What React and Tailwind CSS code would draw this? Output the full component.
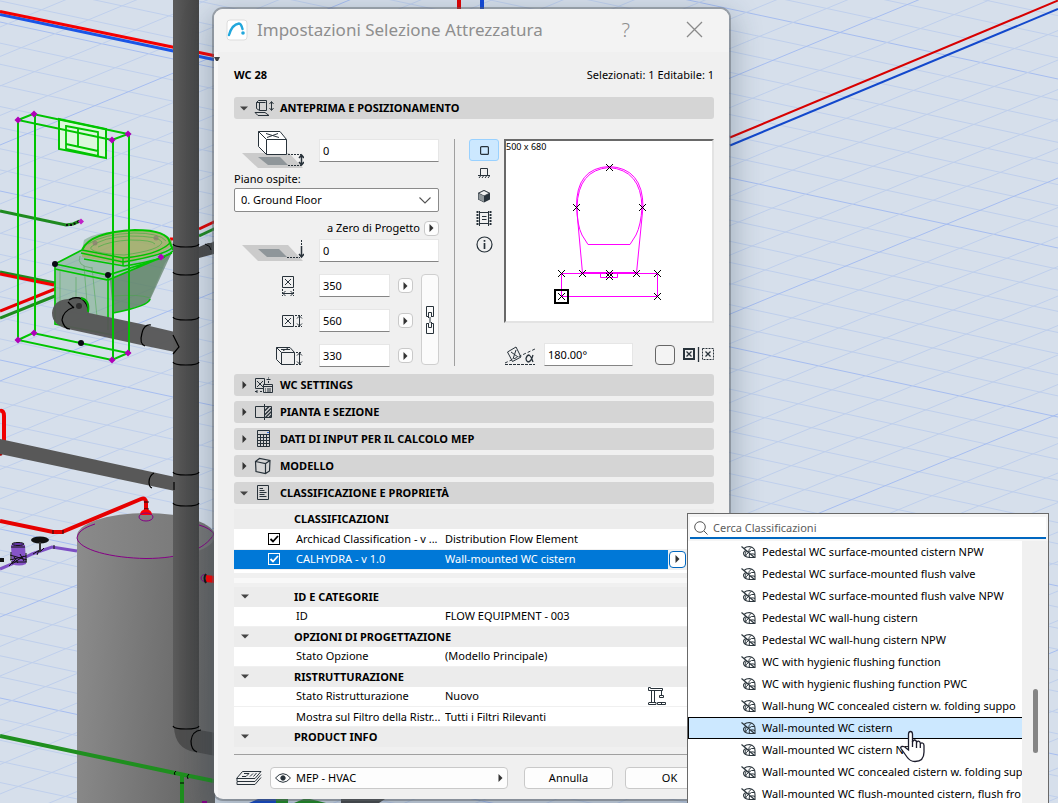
import React from "react";

const INK = "#28323a";

/* ---------- 3D viewport ---------- */

const range = (n) => Array.from({ length: n }, (_, i) => i);

function Viewport() {
  const rings = [247, 275, 320, 365, 475, 506, 729];
  return (
    <svg
      className="absolute inset-0 h-full w-full"
      viewBox="0 0 1058 803"
      preserveAspectRatio="xMinYMin slice"
      fill="none"
      aria-hidden="true"
    >
      <defs>
        <linearGradient id="riser" x1="0" x2="1" y1="0" y2="0">
          <stop offset="0" stopColor="#5b5b5b" />
          <stop offset="0.5" stopColor="#4f4f4f" />
          <stop offset="1" stopColor="#454545" />
        </linearGradient>
        <linearGradient id="tank" x1="0" x2="1" y1="0" y2="0.1">
          <stop offset="0" stopColor="#8c8c8c" />
          <stop offset="1" stopColor="#646464" />
        </linearGradient>
        <linearGradient id="lid" x1="0" x2="1" y1="0" y2="0">
          <stop offset="0" stopColor="#8a8a8a" />
          <stop offset="1" stopColor="#757575" />
        </linearGradient>
      </defs>

      <g strokeWidth="1">
        {range(50).map((i) => {
          const y = 22 + (i - 12) * 21.125;
          return <path key={i} d={`M0 ${y}L1058 ${y + 226}`} stroke={(i - 12) % 8 === 0 ? "#a6bdf0" : "#bfcfec"} />;
        })}
        {range(46).map((i) => {
          const y = 145 + (i - 4) * 29.5;
          return <path key={i} d={`M0 ${y}L1058 ${y - 439}`} stroke={(i - 4) % 8 === 0 ? "#a6bdf0" : "#bfcfec"} />;
        })}
      </g>

      {/* supply lines */}
      <g strokeWidth="3">
        <path d="M0 14.5L216 60" stroke="#1a55e6" />
        <path d="M0 11.5L216 56" stroke="#f50000" />
        <path d="M730 145.500L1058 9" stroke="#1248cc" strokeWidth="2" />
        <path d="M730 137.500L1058 0.500" stroke="#d80000" strokeWidth="2" />
        <path d="M459 0V10" stroke="#e00000" strokeWidth="4" />
        <path d="M482 0V10" stroke="#1248d8" strokeWidth="4" />
        <path d="M199 229L216 221" stroke="#e00000" />
        <path d="M199 236L216 228" stroke="#1f8a1f" />
        <path d="M0 272L55 283" stroke="#1f8a1f" />
        <path d="M0 274L54 285" stroke="#f50000" />
        <path d="M0 318L55 296" stroke="#1f8a1f" />
        <path d="M0 311L55 289" stroke="#e80000" />
        <path d="M0 211L66 225L73 224L80 221" stroke="#1f8a1f" />
        <path d="M66 225h6l7-4" stroke="#111" strokeDasharray="2 2" strokeWidth="2" />
        <path d="M170 239h5" stroke="#f50000" />
      </g>
      <path d="M78 221.500l3-3 3 3-3 3z" fill="#c020c8" />

      {/* tank */}
      <path d="M77 538V803H215V540Z" fill="url(#tank)" />
      <ellipse cx="146" cy="536" rx="69" ry="23" fill="url(#lid)" />
      <path d="M77 538C78 532 83 528 95 524M77 538C79 550 112 558 146 558.500C180 558.500 205 550 214 534M199 525Q210 528 214 534" stroke="#850085" />
      <path d="M201 578a3 4 0 0 1 4-3M201 578a3 4 0 0 0 4 3" stroke="#850085" />
      <path d="M206 575L215 576V583L206 582Z" fill="#f00" />
      <path d="M206 574q-3 4 0 9" stroke="#111" strokeWidth="2" />

      {/* hot water line */}
      <path d="M0 521L53 532L62 532L141 499Q146 497 146 503V512" stroke="#e60000" strokeWidth="4" />
      <path d="M53 530v4M63 530v4M144 502h5M144 509h5" stroke="#111" />
      <path d="M140 515q0-5 6-6q6 1 6 6z" fill="#f00" />
      <ellipse cx="146" cy="517" rx="7" ry="4" stroke="#850085" />
      <path d="M0 411Q4 410 4 416V442" stroke="#f00000" strokeWidth="4" />
      <path d="M0 455l2-1" stroke="#a00" strokeWidth="2" />

      {/* valves */}
      <path d="M0 569L12 564L32 554L52 547L77 551" stroke="#7d4fc4" strokeWidth="3" />
      <path d="M11 545q7-3 14 0l1 19q-7 3-14 0z" fill="#8654c8" />
      <path d="M11 547h14M10 555l17 5M10 560l16-4M12 564l12-8M11 562h16M9 566l6-6M11 552v8M26 553v9M14 557l4 6M20 554l4 7M33 554l5-3M37 555l2-5M40 552l4-4M54 545v4" stroke="#111" />
      <ellipse cx="18" cy="544" rx="6" ry="1.500" fill="#6637ac" stroke="#111" />
      <ellipse cx="40" cy="540" rx="9" ry="3.500" fill="#111" />
      <path d="M40 542V552" stroke="#333" strokeWidth="2" />
      <path d="M0 558h4v4h-4z" fill="#111" />

      {/* waste pipes */}
      <path d="M0 439L175 477V491L0 454Z" fill="#585858" />
      <path d="M154 473q-5 3-5 9q0 5 3 6" stroke="#000" strokeWidth="1.200" />
      <path d="M199 247L208 243Q213 243 214 241V254L199 258Z" fill="#4b4b4b" />
      <path d="M205 244q6 2 6 6" stroke="#000" />

      {/* cistern and bowl */}
      <path d="M55 264L82 250L84 240Q96 231 135 230Q172 231 173 244Q174 254 165 263L149 301Q145 306 113 313L112 336L55 324Z" fill="#4c8f58" fillOpacity="0.400" />
      <path d="M110 280L172 252L150 300Q145 307 113 313Z" fill="#5b7c62" fillOpacity="0.700" />
      <path d="M82 250Q85 232 135 230Q170 231 172 243Q173 252 122 264L82 257Z" fill="#a9ad63" fillOpacity="0.750" />
      <path d="M82 250Q90 232 135 230Q168 230 170 243L173 250" stroke="#00c400" strokeWidth="2" />
      <path d="M81 253L123 262Q166 255 173 247M84 259L124 266Q164 260 173 251M82 250L123 258Q158 255 170 243M123 258V266" stroke="#00c400" strokeWidth="1.500" />
      <path d="M91 247Q102 237 130 236Q159 236 162 242Q161 250 124 255Q88 253 91 247ZM88 244Q104 234 134 233Q160 233 166 241M98 247Q110 241 130 240Q152 240 155 244" stroke="#3fae3f" strokeOpacity="0.650" />
      <path d="M55 264L82 250M55 269L108 280L172 253M55 264L108 275L165 257M55 264V324L113 335V280M108 276V330M113 313Q149 306 150 299" stroke="#00c400" strokeWidth="1.700" />
      <path d="M76 277V310M84 266L88 315M92 267L97 317M60 270V320M113 296Q140 294 150 298M80 256Q76 266 92 268" stroke="#43a543" strokeOpacity="0.500" />
      <circle cx="95" cy="243" r="2.500" fill="#8a7a72" fillOpacity="0.700" />
      <circle cx="156" cy="238" r="2.500" fill="#8a7a72" fillOpacity="0.700" />

      <path d="M76 297Q86 296 88 305L89 313L141 324L175 332V352L141 345L68 329Q52 325 52 313Q53 300 68 299Z" fill="#565656" fillOpacity="0.960" />
      <path d="M69 300q6-4 13-1q6 5 6 12M74 308l-6-6M74 307q-11 4-12 13q2 9 8 9" stroke="#000" strokeWidth="1.200" />
      <path d="M81 298Q90 300 88 312" stroke="#00b400" strokeWidth="2" />
      <circle cx="79" cy="306" r="3" fill="#2f2f2f" />
      <path d="M151 325q-7-1-9 8q-3 11 3 13" stroke="#000" strokeWidth="1.200" />
      <path d="M113 276V334" stroke="#00b400" strokeWidth="1.500" />

      {/* bounding frame */}
      <path d="M59 119L106 129V158L59 149Z" fill="#dcf8dc" stroke="#00c400" strokeWidth="2" />
      <path d="M66 126L98 132V156L66 149ZM78 129V147M66 144L98 151" stroke="#00c400" strokeWidth="1.800" />
      <path d="M18 120L33 114L128 134L112 140ZM18 340L33 333L128 353L112 360ZM18 120V340M35 114V333M113 141V360M129 134V353" stroke="#00c400" strokeWidth="2" />
      {[[18, 120], [34, 114], [128, 134], [112, 140], [18, 340], [34, 333], [128, 353], [112, 360], [161, 257]].map(([x, y]) => (
        <path key={`${x}-${y}`} d={`M${x - 3.5} ${y}l3.500-3.500 3.500 3.500-3.500 3.500z`} fill="#b000b8" />
      ))}
      {[[55, 264], [108, 275], [81, 343]].map(([x, y]) => (
        <circle key={x} cx={x} cy={y} r="3" fill="#0a0a14" />
      ))}

      {/* riser */}
      <path d="M174 727Q175 749 195 752L216 756V733L199 730V727Z" fill="#4d4d4d" />
      <path d="M201 730q-9 1-10 11q0 9 6 11" stroke="#000" strokeWidth="1.200" />
      <path d="M173 0H199V728H173Z" fill="url(#riser)" />
      {rings.map((y) => (
        <path key={y} d={`M173 ${y - 3}Q174 ${y} 186 ${y}Q198 ${y} 199 ${y - 3}`} stroke="#000" strokeWidth="1.200" />
      ))}
      <path d="M173 335l6 12-6 7M174 482v8" stroke="#000" strokeWidth="1.200" />

      {/* drain line */}
      <path d="M0 736L175 773L214 781" stroke="#1f8f1f" strokeWidth="4" />
      <path d="M182 776V803" stroke="#1f8f1f" strokeWidth="4" />
      <path d="M176 771q-3 2-1 4M189 774q-3 2-1 5M180 783h4" stroke="#000" />
      <path d="M202 802h5" stroke="#850085" strokeWidth="2" />
      <path d="M249 803l9-4h18v4z" fill="#1248cc" />
      <path d="M276 799h12v4h-12zM294 803l12-5 20 5z" fill="#1f8f1f" />
      <path d="M341 803v-4h44l-6 4z" fill="#4a4a4a" />
    </svg>
  );
}

/* ---------- icons ---------- */

function Icon({ w, h, children, className = "" }) {
  return (
    <svg width={w} height={h} viewBox={`0 0 ${w} ${h}`} fill="none" stroke={INK} className={`shrink-0 ${className}`} aria-hidden="true">
      {children}
    </svg>
  );
}

const TriRight = () => (
  <svg width="5" height="8" viewBox="0 0 5 8" className="shrink-0" aria-hidden="true"><path d="M0.500 0L4.500 4L0.500 8Z" fill="#333" /></svg>
);
const TriDown = () => (
  <svg width="8" height="5" viewBox="0 0 8 5" className="shrink-0" aria-hidden="true"><path d="M0 0.500H8L4 4.500Z" fill="#444" /></svg>
);

const PositionIcon = () => (
  <Icon w={20} h={18}>
    <path d="M2.500 3.500L4.500 1.500H12.500V11.500H5.500L2.500 9.500ZM5.500 3.500V11.500M2.500 3.500H11.500M1 13.500L4 16.500H15L11 13.500Z" />
    <path d="M17.500 3V11M15.500 5L17.500 2.500L19.500 5M15.500 9L17.500 11.500L19.500 9" />
  </Icon>
);
const WcSettingsIcon = () => (
  <Icon w={20} h={18}>
    <path d="M1.500 2.500H10.500V12.500H1.500ZM3 5L9 11M9 5L3 11" />
    <path d="M9.500 8.500H18.500V16.500H9.500Z" fill="#d5d5d5" />
    <path d="M9.500 10.500H18.500M11 13h1M13 13h4M11 15h1M13 15h4" />
    <path d="M12.500 3.500h4M14.500 1.500v1M14.500 5v2M1 15.500h2M6 15.500h2M3 14v3" />
  </Icon>
);
const PlanIcon = () => (
  <Icon w={20} h={18}>
    <path d="M1.500 3.500H10M1.500 3.500V14.500H10M10.500 1V17M10.500 3.500H17.500V14.500H10.500" />
    <path d="M10.500 8L15 3.500M10.500 12L17.500 5M11.500 14.500L17.500 8.500M15 14.500L17.500 12" strokeWidth="1.400" />
  </Icon>
);
const CalcIcon = () => (
  <Icon w={20} h={18}>
    <path d="M3.500 0.500H15.500V16.500H3.500ZM3.500 4.500H15.500M3.500 7.500H15.500M3.500 10.500H15.500M3.500 13.500H15.500M6.500 4.500V16.500M9.500 4.500V16.500M12.500 4.500V16.500" />
    <path d="M13 2.500h2" stroke="#2b6be0" />
  </Icon>
);
const ModelIcon = () => (
  <Icon w={20} h={18}>
    <path d="M1.500 4.500L5.500 1.500L16 3.500L15.500 14L11.500 16.500L2 14.500ZM1.500 4.500L11.500 6.500L16 3.500M11.500 6.500V16.500" strokeWidth="1.200" />
  </Icon>
);
const DocIcon = () => (
  <Icon w={20} h={18}>
    <path d="M3.500 1.500H14.500V15.500H3.500ZM5.500 4.500H9M5.500 6.500H10.500M5.500 8.500H12.500M5.500 10.500H10.500M5.500 12.500H12.500" />
  </Icon>
);
const ElevationIcon = () => (
  <Icon w={62} h={40}>
    <path d="M0 24H47L61 39H16Z" fill="#cbcbcb" stroke="none" />
    <path d="M16 28H38L46 36H26Z" fill="#8f969a" stroke="none" />
    <path d="M16.500 2.500H38L44.500 10.500V25.500H24.500L16.500 17.500Z" fill="#fff" />
    <path d="M16.500 2.500L24.500 10.500H44.500M24.500 10.500V25.500M24 4.500L37 8.500M36 4.500L25 8.500" />
    <path d="M46 25.500H59M46 36.500H59" strokeDasharray="2 1" />
    <path d="M59.500 27V35M57 29L59.500 26L62 29M57 33L59.500 36L62 33" strokeWidth="1.500" />
  </Icon>
);
const ProjectZeroIcon = () => (
  <Icon w={62} h={23}>
    <path d="M0 6H46L61 22H16Z" fill="#cbcbcb" stroke="none" />
    <path d="M16 10H37L45 18H25Z" fill="#8f969a" stroke="none" />
    <path d="M45 18.500H58" strokeDasharray="2 1" />
    <path d="M59.500 1V7" strokeDasharray="2 1" />
    <path d="M59.500 7V17M57 15L59.500 18L62 15" strokeWidth="1.500" />
  </Icon>
);
const WidthIcon = () => (
  <Icon w={14} h={22}>
    <path d="M1.500 1.500H12.500V12.500H1.500ZM4 4L10 10M10 4L4 10" />
    <path d="M1.500 14V21M12.500 14V21" strokeDasharray="2 1" />
    <path d="M2 18.500H12M4.500 16L2 18.500L4.500 21M9.500 16L12 18.500L9.500 21" />
  </Icon>
);
const DepthIcon = () => (
  <Icon w={22} h={14}>
    <path d="M1.500 1.500H12.500V12.500H1.500ZM4 4L10 10M10 4L4 10" />
    <path d="M14 1.500H21M14 12.500H21" strokeDasharray="2 1" />
    <path d="M18.500 2V12M16 4.500L18.500 2L21 4.500M16 9.500L18.500 12L21 9.500" />
  </Icon>
);
const HeightIcon = () => (
  <Icon w={28} h={20}>
    <path d="M1.500 1.500H15L19.500 6.500V18.500H6.500L1.500 13.500ZM1.500 1.500L6.500 6.500H19.500M6.500 6.500V18.500M6 3.500H15M8 4.500L13 2.500" />
    <path d="M21 6.500H27M21 18.500H27" strokeDasharray="2 1" />
    <path d="M24.500 7V18M22 9.500L24.500 7L27 9.500M22 15.500L24.500 18L27 15.500" />
  </Icon>
);
const ChainIcon = () => (
  <Icon w={10} h={30}>
    <path d="M3.500 11.500H1.500V1.500H8.500V11.500H6.500M3.500 18.500H1.500V28.500H8.500V18.500H6.500" />
    <path d="M3.500 13V7.500H6.500V12M6.500 17V22.500H3.500V18M5 12V18" />
  </Icon>
);
const AngleIcon = () => (
  <Icon w={32} h={22}>
    <path d="M3.500 8L12 3L17 13L8.500 17.500ZM7 8L14 13M12 6L9 15" />
    <path d="M1 20.500H31" strokeDasharray="3 1" />
    <path d="M1 19L31 5" strokeDasharray="3 2" />
    <path d="M29 11Q27 18 24 18Q22 17 22 14.500Q23 11 25 11Q27 12 29 18" fill="#f0f0f0" strokeWidth="1.300" />
  </Icon>
);
const TargetIcon = () => (
  <svg width="15" height="15" viewBox="0 0 15 15" fill="none" stroke="#2c363d" className="shrink-0" aria-hidden="true">
    <path d="M0.500 1.500L13.500 12.500" strokeWidth="1.200" />
    <path d="M3 3.500Q5 1.500 8.500 1.500Q14 2.500 14 7.500V12.500H8.500Q2.500 12 2.500 8Q3 6 5 5.500" strokeWidth="1.100" />
    <path d="M10.500 2Q7.500 4 7.500 7.500M7.500 7.500Q10.500 4.500 13.500 5.500M5.500 5.500Q4 8.500 4 11M7.500 7.500Q5 9 4.500 11.500M8.500 9Q8 11 8.500 12.500M10 9Q12 8.500 14 9.500" />
  </svg>
);
const CraneIcon = () => (
  <Icon w={18} h={18}>
    <path d="M0.500 0.500H2.500V1.500H14.500V3.500H0.500ZM3.500 3.500H6.500V15.500H3.500ZM1 15.500H8V17.500H0.500V15.500M13.500 3.500V8M11.500 8.500H15.500V10.500H11.500ZM9.500 15.500H17.500V17.500H9.500ZM13.500 15.500V17.500" />
  </Icon>
);
const LayersIcon = () => (
  <Icon w={26} h={16}>
    <path d="M6.500 1.500H25L19 8.500H0.500ZM8 3.500H13L10 6.500H6M17 3.500L14 6.500M20.500 3L17.500 6.500" />
    <path d="M1 9V11.500H19L25 4.500M1 12V14.500H19L25 7.500" />
  </Icon>
);
const EyeIcon = () => (
  <Icon w={16} h={10}>
    <path d="M0.500 5Q4 0.700 8 0.700Q12 0.700 15.500 5Q12 9.300 8 9.300Q4 9.300 0.500 5Z" />
    <circle cx="8" cy="5" r="2.200" fill={INK} />
  </Icon>
);

/* ---------- controls ---------- */

function Field({ id, label, value, className = "" }) {
  return (
    <input
      id={id}
      aria-label={label}
      defaultValue={value}
      className={`h-[23px] min-w-0 border border-[#e6e6e6] border-b-[#858585] bg-white px-[3px] text-[11px] outline-none ${className}`}
    />
  );
}

function ArrowButton({ label }) {
  return (
    <button aria-label={label} className="flex size-[15px] shrink-0 items-center justify-center rounded border border-[#c9c9c9] bg-[#fdfdfd]">
      <TriRight />
    </button>
  );
}

function SectionHeader({ icon, title, open }) {
  return (
    <button aria-expanded={!!open} className="flex h-[22px] w-full shrink-0 items-center rounded-[3px] bg-[#d5d5d5] text-left font-bold">
      <span className="flex w-5 justify-center">{open ? <TriDown /> : <TriRight />}</span>
      <span className="flex w-[26px]">{icon}</span>
      <span>{title}</span>
    </button>
  );
}

function DimensionRow({ id, icon, label, value }) {
  return (
    <div className="flex h-[23px] items-center">
      <label htmlFor={id} className="flex w-[85px] items-center justify-end pr-4">{icon}</label>
      <Field id={id} label={label} value={value} className="w-[71px]" />
      <span className="ml-2"><ArrowButton label={`Opzioni ${label}`} /></span>
    </div>
  );
}

function PreviewDrawing() {
  const marks = [[609, 167], [576, 207], [642, 207], [561, 273], [582, 273], [636, 273], [657, 273], [609, 273], [609, 276], [561, 296], [657, 296]];
  return (
    <svg viewBox="506 141 206 180" className="absolute inset-0 h-full w-full" fill="none" stroke="#f0f" aria-hidden="true">
      <path d="M561.500 296.500V273.500H657.500V296.500Z" />
      <path d="M588 244.500L582 235Q577 225 577 207Q578 170 609 167.500Q641 170 642 207Q641 225 636 235L630 244.500Z" />
      <path d="M582.500 273L576.500 207Q576 168 609 166.500Q643 168 643 207L636.500 273" />
      <path d="M583 272.500H636" />
      <path d="M600.500 274V277.500H617.500V274" />
      <g stroke="#000">
        {marks.map(([x, y]) => (
          <path key={`${x}-${y}`} d={`M${x - 3} ${y - 3}l7 7M${x + 4} ${y - 3}l-7 7`} />
        ))}
      </g>
      <path d="M555 290H568V303H555Z" stroke="#000" strokeWidth="2" />
    </svg>
  );
}

function ViewModes() {
  return (
    <div className="flex w-[30px] flex-col items-center">
      <button aria-label="Vista 2D" className="flex h-[22px] w-full items-center justify-center rounded-[3px] border border-[#99d1ff] bg-[#cce8ff]">
        <Icon w={9} h={9}><rect x="0.600" y="0.600" width="7.800" height="7.800" rx="1" strokeWidth="1.200" /></Icon>
      </button>
      <button aria-label="Vista frontale" className="flex h-[23px] items-center">
        <Icon w={14} h={12}><path d="M3.500 9V1.500H10.500V9M1 8.500H13M2 11l1.500-2M5 11l1.500-2M8 11l1.500-2M11 11l1.500-2" /></Icon>
      </button>
      <button aria-label="Vista 3D" className="flex h-[23px] items-center">
        <Icon w={14} h={14}>
          <path d="M7 1L13 4V10.500L7 13.500L1 10.500V4Z" fill={INK} stroke="none" />
          <path d="M7 1.500L12.500 4.200L7 7L1.500 4.200Z" fill="#f0f0f0" strokeWidth="0.800" />
          <path d="M1.500 4.500L7 7V13L1.500 10.300Z" fill="#90979b" stroke="none" />
        </Icon>
      </button>
      <button aria-label="Anteprima" className="flex h-[23px] items-center">
        <Icon w={16} h={15}>
          <path d="M3.500 1.500H12.500M3.500 12.500H12.500M3.500 0V15M12.500 0V15M6 5.500H10.500M6 8.500H10.500" />
          <path d="M1.500 0V15M14.500 0V15" strokeWidth="2" strokeDasharray="2 1" />
        </Icon>
      </button>
      <button aria-label="Informazioni" className="flex h-7 items-center">
        <Icon w={17} h={17}><circle cx="8.500" cy="8.500" r="7.500" strokeWidth="1.200" /><path d="M8.500 7V13M8.500 4V5.700" strokeWidth="1.700" /></Icon>
      </button>
    </div>
  );
}

function PositionPanel() {
  return (
    <div className="flex h-[255px] shrink-0 pt-5 pb-2">
      <div className="flex w-[205px] flex-col">
        <div className="flex items-start">
          <label htmlFor="elev" className="-mt-2.5 -mb-3 w-[85px] pl-2"><ElevationIcon /></label>
          <Field id="elev" label="Elevazione" value="0" className="flex-1" />
        </div>
        <label htmlFor="story" className="mt-2 h-[18px] leading-[18px]">Piano ospite:</label>
        <div className="relative h-6">
          <select id="story" className="block h-6 w-full appearance-none rounded-[2px] border border-[#8a8a8a] bg-white px-1.5 text-[11px] outline-none">
            <option>0. Ground Floor</option>
          </select>
          <svg width="12" height="7" viewBox="0 0 12 7" fill="none" stroke="#555" className="pointer-events-none absolute top-[9px] right-2" aria-hidden="true"><path d="M0.500 0.500L6 6L11.500 0.500" strokeWidth="1.100" /></svg>
        </div>
        <div className="mt-2 flex h-4 items-center justify-end gap-1">
          <label htmlFor="zero">a Zero di Progetto</label>
          <ArrowButton label="Riferimento elevazione" />
        </div>
        <div className="mt-[3px] flex items-center">
          <span className="w-[85px] pl-2"><ProjectZeroIcon /></span>
          <Field id="zero" label="a Zero di Progetto" value="0" className="flex-1" />
        </div>
        <div className="mt-3 flex justify-between">
          <div className="flex flex-col gap-3">
            <DimensionRow id="dim1" icon={<span className="mr-2"><WidthIcon /></span>} label="Larghezza" value="350" />
            <DimensionRow id="dim2" icon={<DepthIcon />} label="Profondità" value="560" />
            <DimensionRow id="dim3" icon={<HeightIcon />} label="Altezza" value="330" />
          </div>
          <button aria-label="Mantieni proporzioni" className="flex h-[91px] w-[18px] items-center justify-center rounded border border-[#cfcfcf] bg-[#fbfbfb]"><ChainIcon /></button>
        </div>
      </div>
      <div className="mr-[14px] ml-[15px] w-px bg-[#a0a0a0]" />
      <ViewModes />
      <div className="ml-[5px] flex min-w-0 flex-1 flex-col justify-between">
        <div className="relative h-[184px] border-2 border-t-[#696969] border-r-[#e3e3e3] border-b-[#e3e3e3] border-l-[#696969] bg-white">
          <span className="block text-[9px] leading-3">500 x 680</span>
          <PreviewDrawing />
        </div>
        <div className="flex items-center">
          <label htmlFor="angle" className="w-10"><AngleIcon /></label>
          <Field id="angle" label="Angolo" value="180.00°" className="w-[89px]" />
          <input type="checkbox" aria-label="Specchia" className="ml-[22px] size-5 appearance-none rounded border border-[#666] bg-[#f3f3f3]" />
          <span className="ml-auto flex">
            <Icon w={32} h={15}>
              <path d="M2 2H12V12H2Z" strokeWidth="2" />
              <path d="M4.500 4.500L9.500 9.500M9.500 4.500L4.500 9.500M16.500 0V15" strokeWidth="1.300" />
              <path d="M20.500 1.500H31.500V12.500H20.500Z" strokeDasharray="2 1" />
              <path d="M23.500 4.500L28.500 9.500M28.500 4.500L23.500 9.500" strokeWidth="1.300" />
            </Icon>
          </span>
        </div>
      </div>
    </div>
  );
}

function Tick({ label, light }) {
  return (
    <span className="relative mx-auto block size-3">
      <input type="checkbox" defaultChecked aria-label={label} className={light ? "block size-3 appearance-none border border-white bg-[#0078d7]" : "block size-3 appearance-none border border-black bg-white"} />
      <svg viewBox="0 0 12 12" fill="none" stroke={light ? "#fff" : "#000"} strokeWidth="1.800" className="pointer-events-none absolute inset-0 size-3" aria-hidden="true"><path d="M2.500 6L5 8.500L10 3" /></svg>
    </span>
  );
}

function GroupRow({ title, collapsible = true }) {
  return (
    <tr className="h-5 bg-[#ececec]">
      <td className="pl-[7px]">{collapsible && <TriDown />}</td>
      <th colSpan={3} scope="colgroup" className="text-left font-bold">{title}</th>
    </tr>
  );
}

function PropertyRow({ name, value, tick, selected, extra }) {
  return (
    <tr className={selected ? "h-5 border-b border-[#f0f0f0] bg-[#0078d7] text-white" : "h-5 border-b border-[#f0f0f0] bg-white"}>
      <td className="pl-5">{tick && <Tick label={name} light={selected} />}</td>
      <td className="truncate pl-0.5">{name}</td>
      <td className="truncate">{value}</td>
      <td className={selected ? "bg-[#f0f0f0]" : ""}>{extra}</td>
    </tr>
  );
}

function PropertyTable({ children }) {
  return (
    <table className="w-full table-fixed border-collapse">
      <colgroup>
        <col className="w-[60px]" />
        <col className="w-[151px]" />
        <col />
        <col className="w-[46px]" />
      </colgroup>
      <tbody>{children}</tbody>
    </table>
  );
}

function SettingsDialog() {
  return (
    <section
      role="dialog"
      aria-label="Impostazioni Selezione Attrezzatura"
      className="absolute top-[9px] left-[214px] flex w-[515px] flex-col overflow-hidden rounded-[9px] bg-[#f0f0f0] shadow-[0_0_0_2px_rgba(90,95,100,0.45),0_10px_28px_6px_rgba(40,60,80,0.28)]"
    >
      <header className="flex h-[43px] items-center bg-[#f3f3f3] pr-[22px] pb-0.5 pl-3 text-[#8e8e8e]">
        <svg width="22" height="22" viewBox="0 0 22 22" fill="none" aria-hidden="true">
          <rect x="1" y="1" width="20" height="20" rx="3" fill="#fff" stroke="#ddd" />
          <path d="M3 16C5 9 9 5 13 4.500Q15 4.500 16.500 10" stroke="#22a7dc" strokeWidth="2.400" strokeLinecap="round" />
          <circle cx="17" cy="14" r="1.800" fill="#22a7dc" />
        </svg>
        <h1 className="ml-[9px] text-[17px]">Impostazioni Selezione Attrezzatura</h1>
        <button aria-label="Aiuto" className="ml-auto text-[20px] font-light">?</button>
        <button aria-label="Chiudi" className="ml-[52px] p-1">
          <svg width="17" height="17" viewBox="0 0 17 17" stroke="#8a8a8a" strokeWidth="1.300" aria-hidden="true"><path d="M1 1L16 16M16 1L1 16" /></svg>
        </button>
      </header>

      <div className="flex flex-col border-l-4 border-[#f7f7f7] pr-[15px] pb-2.5 pl-4">
        <div className="flex h-[45px] items-center justify-between">
          <h2 className="font-bold">WC 28</h2>
          <p>Selezionati: 1 Editabile: 1</p>
        </div>

        <SectionHeader open icon={<PositionIcon />} title="ANTEPRIMA E POSIZIONAMENTO" />
        <PositionPanel />
        <div className="flex flex-col gap-[5px]">
          <SectionHeader icon={<WcSettingsIcon />} title="WC SETTINGS" />
          <SectionHeader icon={<PlanIcon />} title="PIANTA E SEZIONE" />
          <SectionHeader icon={<CalcIcon />} title="DATI DI INPUT PER IL CALCOLO MEP" />
          <SectionHeader icon={<ModelIcon />} title="MODELLO" />
          <SectionHeader open icon={<DocIcon />} title="CLASSIFICAZIONE E PROPRIETÀ" />
        </div>

        <div className="mt-[5px]">
          <PropertyTable>
            <GroupRow title="CLASSIFICAZIONI" collapsible={false} />
            <PropertyRow tick name="Archicad Classification - v ..." value="Distribution Flow Element" />
            <PropertyRow
              tick
              selected
              name="CALHYDRA - v 1.0"
              value="Wall-mounted WC cistern"
              extra={
                <button aria-label="Scegli classificazione" className="ml-px flex size-[17px] items-center justify-center rounded border border-[#0067c0] bg-white">
                  <TriRight />
                </button>
              }
            />
          </PropertyTable>
          <div className="h-[3px] bg-white" />
          <div className="mt-[5px] mb-1 h-[5px] bg-[#f8f8f8]" />
          <PropertyTable>
            <GroupRow title="ID E CATEGORIE" />
            <PropertyRow name="ID" value="FLOW EQUIPMENT - 003" />
            <GroupRow title="OPZIONI DI PROGETTAZIONE" />
            <PropertyRow name="Stato Opzione" value="(Modello Principale)" />
            <GroupRow title="RISTRUTTURAZIONE" />
            <PropertyRow name="Stato Ristrutturazione" value="Nuovo" extra={<span className="-ml-5 block"><CraneIcon /></span>} />
            <PropertyRow name="Mostra sul Filtro della Ristr..." value="Tutti i Filtri Rilevanti" />
            <GroupRow title="PRODUCT INFO" />
          </PropertyTable>
        </div>

        <footer className="mt-[7px] flex items-center border-t border-[#a0a0a0] pt-3">
          <span className="flex w-9 pl-0.5"><LayersIcon /></span>
          <button className="flex h-[22px] min-w-0 flex-1 items-center rounded border border-[#c9c9c9] bg-[#fdfdfd] px-1">
            <EyeIcon />
            <span className="mr-auto ml-[5px]">MEP - HVAC</span>
            <TriRight />
          </button>
          <button className="ml-4 h-[22px] w-[89px] rounded border border-[#c9c9c9] bg-[#fdfdfd]">Annulla</button>
          <button className="ml-3 h-[22px] w-[89px] rounded border border-[#c9c9c9] bg-[#fdfdfd]">OK</button>
        </footer>
      </div>
    </section>
  );
}

/* ---------- classification picker ---------- */

const classes = [
  "Pedestal WC surface-mounted cistern NPW",
  "Pedestal WC surface-mounted flush valve",
  "Pedestal WC surface-mounted flush valve NPW",
  "Pedestal WC wall-hung cistern",
  "Pedestal WC wall-hung cistern NPW",
  "WC with hygienic flushing function",
  "WC with hygienic flushing function PWC",
  "Wall-hung WC concealed cistern w. folding suppo",
  "Wall-mounted WC cistern",
  "Wall-mounted WC cistern NPW",
  "Wall-mounted WC concealed cistern w. folding sup",
  "Wall-mounted WC flush-mounted cistern, flush fro",
];
const CURRENT = "Wall-mounted WC cistern";

function ClassificationPicker() {
  return (
    <div className="absolute top-[513px] left-[687px] w-[362px] border border-[#696969] bg-[#f5f5f5]">
      <label className="mx-0.5 mt-[3px] flex h-[22px] items-center border-b-2 border-[#0067c0] bg-white pt-0.5">
        <svg width="14" height="14" viewBox="0 0 14 14" fill="none" stroke="#555" className="ml-1 shrink-0" aria-hidden="true"><circle cx="6" cy="6" r="5.300" /><path d="M10 10L13.500 13.500" /></svg>
        <input aria-label="Cerca Classificazioni" placeholder="Cerca Classificazioni" className="min-w-0 flex-1 bg-transparent pl-[5px] text-[11px] outline-none placeholder:text-[#5c5c5c]" />
      </label>
      <div className="mt-0.5 flex bg-[#f0f0f0]">
        <ul role="listbox" aria-label="Classificazioni" className="min-w-0 flex-1 overflow-hidden bg-white">
          {classes.map((c) => (
            <li
              key={c}
              role="option"
              aria-selected={c === CURRENT}
              className={c === CURRENT
                ? "flex h-[22px] items-center gap-1.5 border-y border-l border-black bg-[#cce8ff] pl-[52px] whitespace-nowrap"
                : "flex h-[22px] items-center gap-1.5 pl-[53px] whitespace-nowrap"}
            >
              <TargetIcon />
              {c}
            </li>
          ))}
        </ul>
        <div className="w-[26px] pt-[148px]">
          <div className="ml-[11px] h-16 w-[5px] rounded-full bg-[#858585]" />
        </div>
      </div>
    </div>
  );
}

function HandCursor() {
  return (
    <svg width="27" height="33" viewBox="0 0 27 33" className="pointer-events-none absolute top-[730px] left-[899px]" fill="#fff" stroke="#1c1c2c" strokeWidth="1.300" aria-hidden="true">
      <path d="M9.500 20V4Q9.700 1.500 11.500 1.500T13.500 4V12Q14 9.800 15.700 10T17.500 12V13Q18 11 19.500 11.200T21.300 13V14Q22 12.500 23.500 13T25 15.500V22Q25 31.500 16 31.500Q11 31.500 8 27L2 18.500Q1 17 3 16.500Q5 16 7 18Z" />
      <path d="M13.500 11V17M17.500 13V18M21.300 14V18" />
    </svg>
  );
}

export default function App() {
  return (
    <main className="relative min-h-screen overflow-hidden bg-[#d6dfeb] font-['Noto_Sans','Open_Sans',sans-serif] text-[11px] leading-4 text-black">
      <Viewport />
      <SettingsDialog />
      <svg width="6" height="5" viewBox="0 0 6 5" className="absolute top-[57px] left-[214px]" aria-hidden="true"><path d="M0 0H6L4 4H2Z" fill="#444" /></svg>
      <ClassificationPicker />
      <HandCursor />
    </main>
  );
}
